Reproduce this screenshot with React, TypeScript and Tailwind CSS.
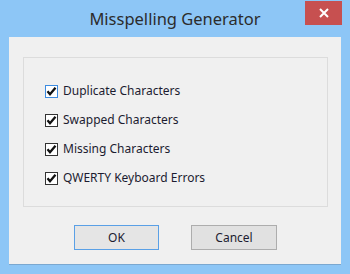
import React from "react";

const items = [
  "Duplicate Characters",
  "Swapped Characters",
  "Missing Characters",
  "QWERTY Keyboard Errors",
];

function Check({ focused }: { focused?: boolean }) {
  return (
    <div
      className={
        "w-[13px] h-[13px] bg-white border flex items-center justify-center shrink-0 " +
        (focused ? "border-[#3c8be0]" : "border-[#333333]")
      }
    >
      <svg width="11" height="11" viewBox="0 0 11 11">
        <path d="M1.5 5.3 L4 8.3 L9.5 1.8" fill="none" stroke="#111" strokeWidth="2.3" />
      </svg>
    </div>
  );
}

export default function App() {
  return (
    <div
      className="w-[350px] h-[274px] bg-[#8dc6f6] flex flex-col overflow-hidden relative"
      style={{ fontFamily: '"Noto Sans", "Open Sans", sans-serif' }}
    >
      <div className="h-[37px] relative flex items-center justify-center shrink-0">
        <span className="text-[16.5px] text-[#2c2c2c] mt-[1px]">Misspelling Generator</span>
        <div className="absolute right-[8px] top-[1px] w-[37px] h-[24px] bg-[#c75050] flex items-center justify-center">
          <svg width="10" height="10" viewBox="0 0 10 10">
            <path d="M1 1 L9 9 M9 1 L1 9" stroke="white" strokeWidth="2" />
          </svg>
        </div>
      </div>
      <div className="mx-[9px] mb-[9px] flex-1 bg-[#f0f0f0] border-b border-[#7ba8d0] flex flex-col">
        <div className="ml-[14px] mt-[20px] w-[305px] h-[150px] border border-[#dcdcdc] flex flex-col pl-[21px] pt-[25px] gap-[13px]">
          {items.map((t, i) => (
            <div key={t} className="flex items-center gap-[5px] h-[16px]">
              <Check focused={i === 0} />
              <span className="text-[12px] text-[#1c1c30] leading-none">{t}</span>
            </div>
          ))}
        </div>
        <div className="flex mt-[18px] ml-[65px] gap-[32px]">
          <div className="w-[85px] h-[25px] border border-[#5aa0e6] bg-[#e5e5e5] flex items-center justify-center text-[12px] text-[#1c1c30]">
            OK
          </div>
          <div className="w-[86px] h-[25px] border border-[#adadad] bg-[#e1e1e1] flex items-center justify-center text-[12px] text-[#1c1c30]">
            Cancel
          </div>
        </div>
      </div>
    </div>
  );
}
